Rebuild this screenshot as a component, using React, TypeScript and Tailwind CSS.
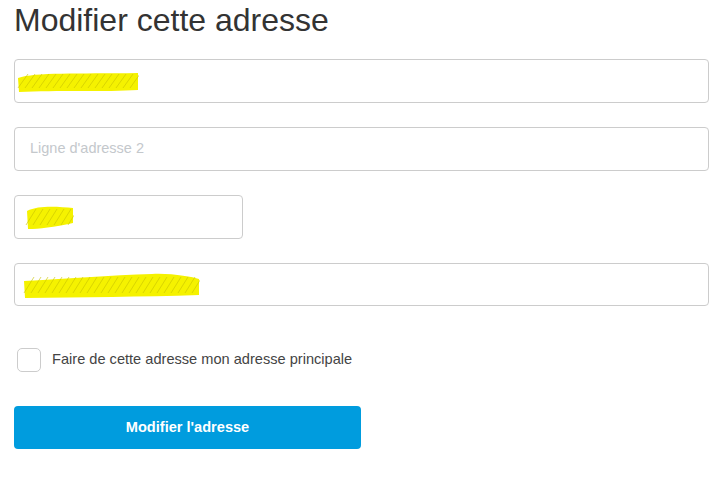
import React from "react";

function Scribble({ w, h, d }: { w: number; h: number; d: string }) {
  return (
    <svg width={w} height={h} viewBox={`0 0 ${w} ${h}`} className="block">
      <path d={d} fill="#f5f200" />
      <g stroke="#c9c400" strokeWidth="1" opacity="0.6">
        {Array.from({ length: Math.floor(w / 7) }).map((_, i) => (
          <line key={i} x1={i * 7 + 2} y1={h - 6} x2={i * 7 + 12} y2={6} />
        ))}
      </g>
    </svg>
  );
}

export default function App() {
  return (
    <div className="w-[727px] h-[481px] bg-white px-[14px] pt-[3px]" style={{ fontFamily: '"Liberation Sans", Arial, sans-serif' }}>
      <h1 className="text-[32px] leading-[34px] text-[#333333] pl-[0px]">Modifier cette adresse</h1>
      <div className="mt-[22px] flex flex-col gap-[24px] w-[695px]">
        <div className="h-[44px] rounded-[4px] border border-[#cccccc] flex items-center pl-[1px]">
          <Scribble w={123} h={26} d="M2 10 C20 4, 60 6, 122 5 L122 22 C90 24, 40 22, 3 24 Z" />
        </div>
        <div className="h-[44px] rounded-[4px] border border-[#cccccc] flex items-center pl-[15px] text-[14.5px] text-[#c4c8cc]">
          Ligne d'adresse 2
        </div>
        <div className="h-[44px] w-[229px] rounded-[4px] border border-[#cccccc] flex items-center pl-[9px]">
          <Scribble w={50} h={28} d="M3 8 C15 2, 35 4, 49 5 L49 20 C30 24, 15 26, 4 26 Z" />
        </div>
        <div className="h-[43px] rounded-[4px] border border-[#cccccc] flex items-center pl-[7px]">
          <Scribble w={178} h={28} d="M2 10 C40 8, 90 4, 130 3 C150 2, 170 6, 177 8 L177 24 C120 26, 60 26, 3 27 Z" />
        </div>
      </div>
      <label className="mt-[42px] flex items-center gap-[11px] pl-[3px]">
        <span className="w-[24px] h-[24px] rounded-[5px] border border-[#cccccc] bg-white" />
        <span className="text-[14.6px] text-[#444444]">Faire de cette adresse mon adresse principale</span>
      </label>
      <button className="mt-[34px] w-[347px] h-[43px] rounded-[4px] bg-[#009cde] text-white text-[14.6px] font-bold">
        Modifier l'adresse
      </button>
    </div>
  );
}
